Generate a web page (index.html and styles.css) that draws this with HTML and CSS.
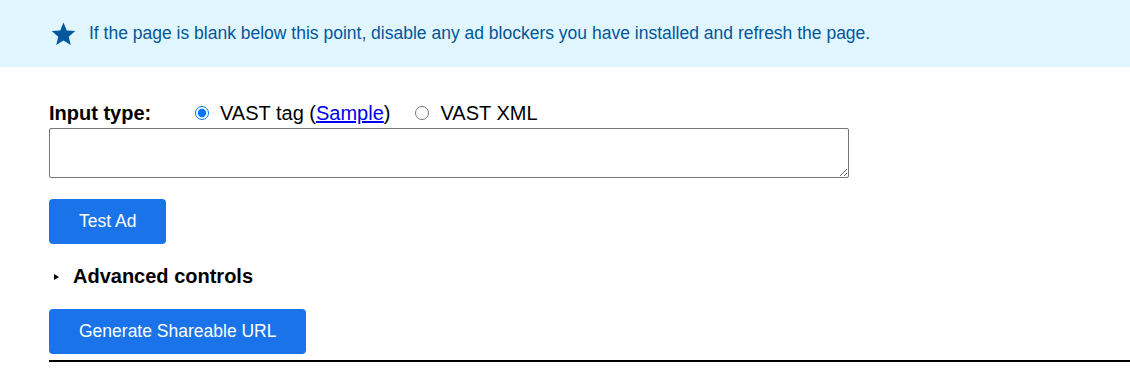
FILE: index.html
```html
<!DOCTYPE html>
<html lang="en">
<head>
    <meta charset="UTF-8">
    <title>VAST Ad Tester</title>
    <link rel="stylesheet" href="styles.css">
</head>
<body>
    <div class="notice">
        <svg class="star" viewBox="0 0 24 24" width="25" height="25"><path d="M12 1.5l3.1 7.6 8.2.6-6.3 5.3 2 8-7-4.4-7 4.4 2-8L.7 9.7l8.2-.6z"/></svg>
        <span>If the page is blank below this point, disable any ad blockers you have installed and refresh the page.</span>
    </div>

    <div class="main">
        <form id="adForm">
            <div class="input-type">
                <span class="field-label">Input type:</span>
                <label class="choice"><input type="radio" name="inputType" value="tag" checked> VAST tag (<a href="#">Sample</a>)</label>
                <label class="choice"><input type="radio" name="inputType" value="xml"> VAST XML</label>
            </div>
            <textarea name="vast" class="vast-input"></textarea>
            <button type="submit" class="btn">Test Ad</button>

            <details class="advanced">
                <summary>Advanced controls</summary>
            </details>

            <button type="button" class="btn">Generate Shareable URL</button>
        </form>
        <hr class="rule">
    </div>
</body>
</html>
```

FILE: styles.css
```css
body {
    margin: 0;
    font-family: Arial, "Liberation Sans", sans-serif;
    background: #fff;
    color: #000;
}
.notice {
    background: #e1f5fe;
    color: #01579b;
    height: 67px;
    display: flex;
    align-items: center;
    padding-left: 51px;
    font-size: 17.5px;
}
.star {
    fill: #01579b;
    margin-right: 13px;
    flex-shrink: 0;
}
.main {
    padding: 34px 0 0 49px;
}
.input-type {
    display: flex;
    align-items: center;
    font-size: 20px;
    height: 24px;
}
.field-label {
    font-weight: bold;
    width: 141px;
}
.choice {
    display: flex;
    align-items: center;
    margin-right: 20px;
}
.choice input {
    width: 14px;
    height: 14px;
    margin: 0 11px 0 5px;
}
.choice a {
    color: #0000ee;
}
.vast-input {
    display: block;
    box-sizing: border-box;
    width: 800px;
    height: 50px;
    margin: 3px 0 21px;
    border: 1px solid #767676;
    border-radius: 2px;
}
.btn {
    display: block;
    background: #1a73e8;
    color: #fff;
    border: none;
    border-radius: 4px;
    font-family: inherit;
    font-size: 17.5px;
    padding: 0 30px;
    height: 45px;
    cursor: pointer;
}
.advanced {
    margin: 21px 0 21px;
}
.advanced summary {
    list-style: none;
    font-size: 20px;
    font-weight: bold;
    cursor: pointer;
    display: flex;
    align-items: center;
}
.advanced summary::-webkit-details-marker {
    display: none;
}
.advanced summary::before {
    content: "";
    border-left: 5px solid #000;
    border-top: 3px solid transparent;
    border-bottom: 3px solid transparent;
    margin: 1px 14px 0 5px;
}
.rule {
    margin: 6px 0 0;
    border: none;
    border-top: 2px solid #000;
}
```
